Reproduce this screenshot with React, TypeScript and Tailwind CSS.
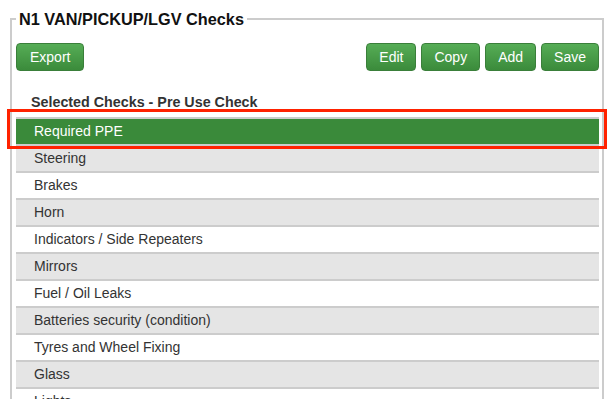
const checks = [
  'Required PPE',
  'Steering',
  'Brakes',
  'Horn',
  'Indicators / Side Repeaters',
  'Mirrors',
  'Fuel / Oil Leaks',
  'Batteries security (condition)',
  'Tyres and Wheel Fixing',
  'Glass',
  'Lights',
  'Wipers',
];

function GreenButton({ label, wide }: { label: string; wide?: boolean }) {
  return (
    <button
      type="button"
      className={
        wide
          ? 'h-[28px] px-[13px] rounded-[4px] border border-[#3a7f3a] bg-gradient-to-b from-[#56ad56] to-[#3b8b3b] text-white text-[14px] leading-none'
          : 'h-[28px] px-[12px] rounded-[4px] border border-[#3a7f3a] bg-gradient-to-b from-[#56ad56] to-[#3b8b3b] text-white text-[14px] leading-none'
      }
    >
      {label}
    </button>
  );
}

export default function App() {
  const selected = 0;

  return (
    <div className="relative h-[399px] overflow-hidden bg-white font-['Liberation_Sans',Arial,sans-serif]">
      <fieldset className="mx-[10px] mt-[7px] border-2 border-[#cccccc] pl-[4px] pr-[3px] pb-[10px]">
        <legend className="px-[3px] text-[16.3px] font-bold text-[#111]">
          N1 VAN/PICKUP/LGV Checks
        </legend>

        <div className="mt-[12px] flex items-center justify-between">
          <GreenButton label="Export" wide />
          <div className="flex gap-[5px]">
            <GreenButton label="Edit" />
            <GreenButton label="Copy" />
            <GreenButton label="Add" />
            <GreenButton label="Save" />
          </div>
        </div>

        <div className="mt-[21px] pl-[15px] text-[14.3px] font-bold text-[#333]">
          Selected Checks - Pre Use Check
        </div>

        <div className="mt-[3px]">
          {checks.map((name, i) => (
            <div
              key={name}
              className={
                i === selected
                  ? 'h-[27px] border-t-2 border-[#cccccc] bg-[#3a8a3a] pl-[18px] text-[14px] leading-[25px] text-white'
                  : i % 2 === 1
                  ? 'h-[27px] border-t-2 border-[#cccccc] bg-[#e5e5e5] pl-[18px] text-[14px] leading-[25px] text-[#333]'
                  : 'h-[27px] border-t-2 border-[#cccccc] bg-white pl-[18px] text-[14px] leading-[25px] text-[#333]'
              }
            >
              {name}
            </div>
          ))}
        </div>
      </fieldset>

      {/* highlight annotation */}
      <div className="pointer-events-none absolute left-[7px] top-[109px] h-[40px] w-[600px] border-[3px] border-[#ff2200]" />
    </div>
  );
}
